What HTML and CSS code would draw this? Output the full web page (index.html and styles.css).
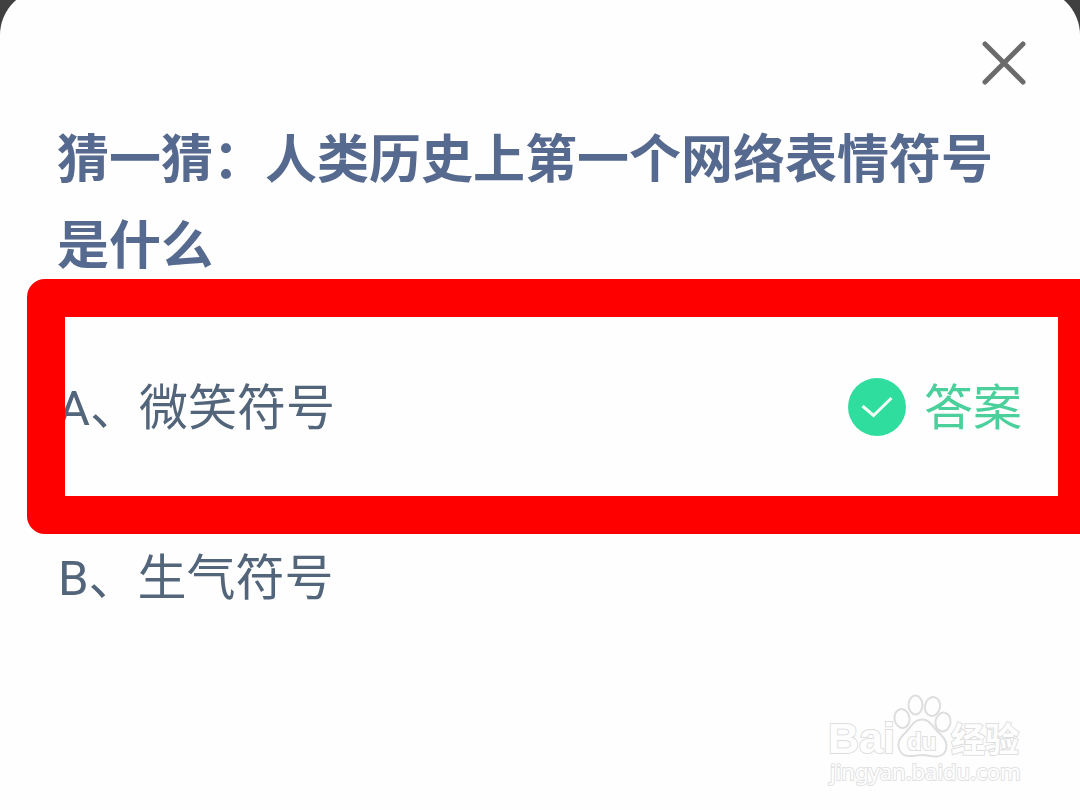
FILE: index.html
```html
<!DOCTYPE html>
<html lang="zh-CN">
<head>
<meta charset="utf-8">
<meta name="viewport" content="width=device-width, initial-scale=1">
<title>猜一猜</title>
<link rel="stylesheet" href="styles.css">
</head>
<body>
<main class="sheet">
  <header class="sheet-bar">
    <button class="close" type="button" aria-label="关闭">
      <svg viewBox="0 0 52 52" aria-hidden="true"><path d="M7 7 45 45M45 7 7 45"/></svg>
    </button>
  </header>
  <h1 class="question">猜一猜：人类历史上第一个网络表情符号是什么</h1>
  <ul class="options">
    <li class="option">
      <button class="choice" type="button">
        <span class="label">A、微笑符号</span>
        <span class="answer">
          <svg class="tick" viewBox="0 0 58 58" aria-hidden="true"><circle cx="29" cy="29" r="29"/><path d="M14.500 28 25.500 37.500 43.500 20"/></svg>
          <span class="label">答案</span>
        </span>
      </button>
      <span class="marker"></span>
    </li>
    <li class="option">
      <button class="choice" type="button"><span class="label">B、生气符号</span></button>
    </li>
  </ul>
  <footer class="credit">
    <svg class="credit-mark" viewBox="0 0 210 100" role="img" aria-label="Baidu 经验">
      <text class="mark-latin" x="8" y="63">Bai</text>
      <ellipse cx="82" cy="28.500" rx="7.500" ry="9.500" transform="rotate(-10 82 28.500)"/>
      <ellipse cx="95.500" cy="15" rx="7" ry="9.500"/>
      <ellipse cx="112.500" cy="16.500" rx="7.500" ry="9.500" transform="rotate(12 112.500 16.500)"/>
      <ellipse cx="123" cy="32" rx="7.500" ry="9.500" transform="rotate(10 123 32)"/>
      <path d="M102 29.500C94 29.500 91 37 86 42C80 48 78 51 78.500 56C79 62 83 66 89 66C95 66 98 65 103 65C108 65 111 67 117 66.500C123 66 126.500 62 126.500 56C126.500 50 123 47 118 42C112 36 110 29.500 102 29.500Z"/>
      <text class="mark-du" x="87" y="60">du</text>
      <text class="mark-cjk" x="131" y="62">经验</text>
      <text class="mark-url" x="10" y="90">jingyan.baidu.com</text>
    </svg>
  </footer>
</main>
</body>
</html>
```
FILE: styles.css
```css
* {
  box-sizing: border-box;
}

body {
  margin: 0;
  background: #404040;
  font-family: "Noto Sans CJK SC", sans-serif;
}

.sheet {
  display: flex;
  flex-direction: column;
  min-height: calc(100vh + 11px);
  margin-top: -11px;
  overflow: hidden;
  padding: 48px 50px 20px 57px;
  border-radius: 46px 46px 0 0;
  background: #fefefe;
}

.sheet-bar {
  display: flex;
  justify-content: flex-end;
  margin-bottom: 24px;
}

.close {
  width: 52px;
  height: 52px;
  padding: 0;
  border: 0;
  background: none;
  cursor: pointer;
}

.close svg {
  display: block;
  fill: none;
  stroke: #6b6b6b;
  stroke-width: 5;
  stroke-linecap: round;
}

.question {
  margin: 0 0 37px;
  color: #56698f;
  font-size: 52px;
  font-weight: 700;
  line-height: 86px;
}

.options {
  margin: 0;
  padding: 0;
  list-style: none;
}

.option {
  position: relative;
}

.choice {
  display: flex;
  align-items: center;
  justify-content: space-between;
  width: 100%;
  height: 170px;
  padding: 0 8px 0 1px;
  border: 0;
  background: none;
  color: #53657a;
  font-family: Roboto, "Noto Sans CJK SC", sans-serif;
  font-size: 49px;
  cursor: pointer;
}

.label {
  display: block;
  padding-bottom: 8px;
}

.answer {
  display: flex;
  align-items: center;
  gap: 18px;
  color: #4bd09c;
}

.tick {
  width: 58px;
  height: 58px;
  fill: #2fdd9e;
}

.tick path {
  fill: none;
  stroke: #f4fff8;
  stroke-width: 3;
}

.marker {
  position: absolute;
  inset: -43px -66px -42px -30px;
  border: 38px solid #f00;
  border-radius: 18px;
  pointer-events: none;
}

.credit {
  display: flex;
  justify-content: flex-end;
  margin-top: auto;
}

.credit-mark {
  width: 210px;
  height: 100px;
  fill: #fefefe;
  stroke: #dedede;
  stroke-width: 2;
}

.mark-latin,
.mark-du,
.mark-cjk,
.mark-url {
  font-family: "Liberation Sans", "Noto Sans CJK SC", sans-serif;
  font-weight: 700;
  paint-order: stroke;
  stroke-width: 2;
}

.mark-latin {
  font-size: 43px;
}

.mark-du {
  font-size: 24px;
}

.mark-cjk {
  font-size: 34px;
}

.mark-url {
  font-family: "Noto Sans", sans-serif;
  font-size: 22px;
  font-weight: 400;
  stroke: #e2e2e2;
}
```
